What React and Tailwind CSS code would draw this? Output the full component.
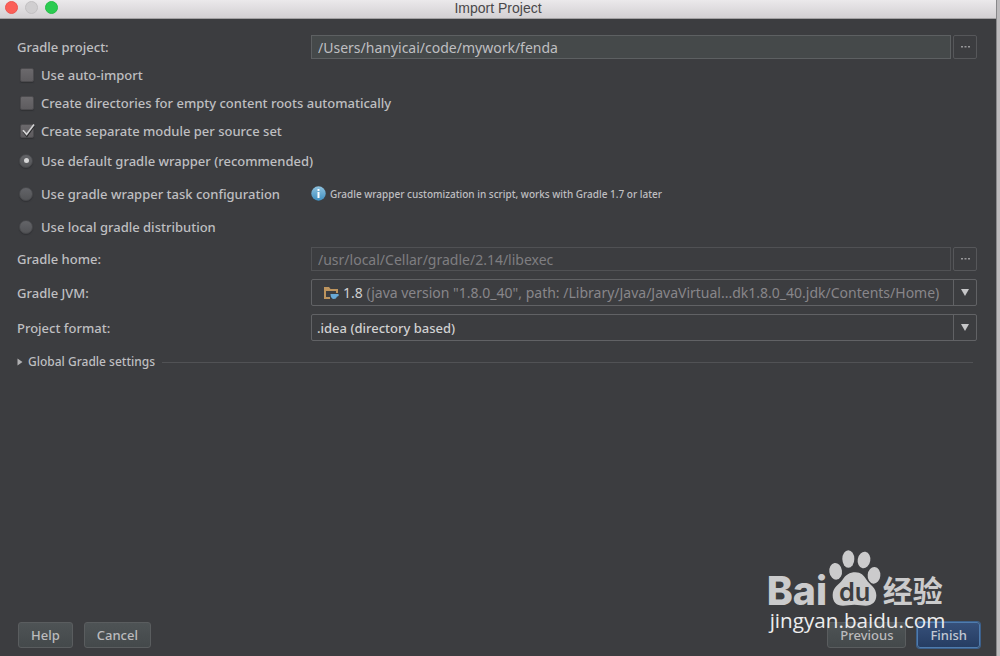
import React, { useState } from "react";

const fieldBox = "h-6 min-w-0 flex-1 border px-1.5 text-[14px] leading-5 font-normal outline-none";

function Row({ label, htmlFor, children }) {
  return (
    <div className="flex items-center">
      <label htmlFor={htmlFor} className="w-[294px] shrink-0">{label}</label>
      <div className="flex min-w-0 flex-1 gap-0.5">{children}</div>
    </div>
  );
}

function BrowseButton({ label }) {
  return (
    <button type="button" aria-label={label} className="flex h-6 w-6 shrink-0 items-center justify-center rounded-xs border border-[#56575a]">
      <svg viewBox="0 0 9 2" className="h-0.5 w-[9px]" fill="#97989a">
        <rect x="0" width="2" height="1.5" />
        <rect x="3.5" width="2" height="1.5" />
        <rect x="7" width="2" height="1.5" />
      </svg>
    </button>
  );
}

function Dropdown({ id, options, children }) {
  return (
    <div className="relative flex h-[27px] min-w-0 flex-1 rounded-xs border border-[#616265] text-[#d0d0d1]">
      <div className="flex min-w-0 flex-1 items-center overflow-hidden whitespace-nowrap" aria-hidden="true">{children}</div>
      <div className="flex w-[23px] shrink-0 items-center justify-center border-l border-[#616265]">
        <svg viewBox="0 0 8 7" className="h-[7px] w-2" fill="#c6c6c8"><path d="M0 0h8L4 7z" /></svg>
      </div>
      <select id={id} className="absolute inset-0 h-full w-full cursor-default opacity-0">
        {options.map((o) => <option key={o}>{o}</option>)}
      </select>
    </div>
  );
}

function Check({ label, initial = false }) {
  const [on, setOn] = useState(initial);
  return (
    <label className="flex h-7 items-center gap-[7px] pl-[3px]">
      <span className="relative flex h-3.5 w-3.5">
        <input type="checkbox" checked={on} onChange={() => setOn(!on)} className="h-3.5 w-3.5 appearance-none rounded-xs border border-[#4c4b4e] bg-linear-to-b from-[#6b696c] to-[#5e5c5f] shadow-[0_1px_1px_#303134]" />
        {on && (
          <svg viewBox="0 0 16 16" className="pointer-events-none absolute -top-0.5 left-0 h-4 w-4" fill="none">
            <path d="M3.3 9.3l3.600 4.600L14 4" stroke="#29292b" strokeWidth="2" />
            <path d="M3 8.200l3.600 4.200L14 2.600" stroke="#d2d2d3" strokeWidth="1.700" />
          </svg>
        )}
      </span>
      {label}
    </label>
  );
}

function Radio({ label, value, current, onChange }) {
  return (
    <label className="flex h-[33px] items-center gap-2 pl-0.5">
      <span className="relative flex h-3.5 w-3.5 items-center justify-center">
        <input type="radio" name="distribution" checked={current === value} onChange={() => onChange(value)} className="h-3.5 w-3.5 appearance-none rounded-full border border-[#47484b] bg-linear-to-b from-[#636468] to-[#535457] shadow-[0_1px_1px_#303134]" />
        {current === value && <span className="pointer-events-none absolute h-[5px] w-[5px] rounded-full bg-[#d6d6d7]" />}
      </span>
      {label}
    </label>
  );
}

function PushButton({ children, primary = false }) {
  return (
    <button
      type="button"
      className={
        primary
          ? "h-[26px] rounded-[3px] border border-[#4f7cae] bg-linear-to-b from-[#36507a] to-[#263d63] px-3 shadow-[0_0_0_1px_#3c608c] text-[#c3c9d3]"
          : "h-[26px] rounded-[3px] border border-[#5a5d5f] bg-linear-to-b from-[#4e5355] to-[#44494b] px-3 text-[#bbbbbd]"
      }
    >
      {children}
    </button>
  );
}

function Watermark() {
  return (
    <div className="pointer-events-none absolute right-[50px] bottom-[18px] text-[#cbcbcc]">
      <svg viewBox="0 0 546 267" className="block h-[89px] w-[182px] overflow-visible" fill="currentColor">
        <text x="8" y="167" fontFamily="Inter, 'Liberation Sans', sans-serif" fontWeight="800" fontSize="118">Bai</text>
        <ellipse cx="215" cy="67" rx="19" ry="25" transform="rotate(-8 215 67)" />
        <ellipse cx="253" cy="30" rx="18" ry="26" />
        <ellipse cx="300" cy="33" rx="19" ry="25" transform="rotate(10 300 33)" />
        <ellipse cx="330" cy="79" rx="19" ry="25" transform="rotate(5 330 79)" />
        <path d="M274 70c17 0 25 9 34 23 9 14 29 23 29 46 0 20-13 31-32 31-12 0-20-3-34-3s-22 3-34 3c-20 0-31-11-31-32 0-23 19-31 29-45 10-15 22-23 39-23z" />
        <text x="225" y="155" fill="#3c3d40" fontFamily="Inter, 'Liberation Sans', sans-serif" fontWeight="600" fontSize="76">du</text>
        <text x="356" y="160" fontFamily="'Noto Sans CJK SC', sans-serif" fontWeight="700" fontSize="90">经验</text>
        <text x="17" y="236" fill="#ededee" fontFamily="'Open Sans', 'Noto Sans', sans-serif" fontSize="62">jingyan.baidu.com</text>
      </svg>
    </div>
  );
}

export default function App() {
  const [dist, setDist] = useState("default");
  return (
    <div className="flex min-h-screen bg-[#bdbbbd] pr-[3px] font-['Noto_Sans','Open_Sans',sans-serif] text-[13px] leading-5 font-medium text-[#bfbfc1]">
      <div className="relative flex min-w-0 flex-1 flex-col border-r border-[#88888a] bg-[#3c3d40]">
        <header className="relative flex h-[19px] items-center justify-center border-b border-[#a3a1a3] bg-linear-to-b from-[#ebe9eb] to-[#d3d0d3] pb-0.5">
          <div className="absolute top-px left-[5px] flex gap-[7px]">
            <button type="button" aria-label="Close" className="h-[13px] w-[13px] rounded-full border border-[#ed5550] bg-[#fb5f58]" />
            <button type="button" aria-label="Minimize" className="h-[13px] w-[13px] rounded-full border border-[#c2c0c2] bg-[#d0ced0]" />
            <button type="button" aria-label="Zoom" className="h-[13px] w-[13px] rounded-full border border-[#24bd46] bg-[#2bcb51]" />
          </div>
          <h1 className="font-['Liberation_Sans',sans-serif] text-[14px] font-normal text-[#49484a]">Import Project</h1>
        </header>

        <form className="flex flex-1 flex-col pt-4" onSubmit={(e) => e.preventDefault()}>
          <div className="pr-[19px] pl-[17px]">
            <Row label="Gradle project:" htmlFor="project">
              <input id="project" type="text" defaultValue="/Users/hanyicai/code/mywork/fenda" className={`${fieldBox} border-[#5d6062] bg-[#45494a]`} />
              <BrowseButton label="Browse project" />
            </Row>
            <div className="mt-0.5">
              <Check label="Use auto-import" />
              <Check label="Create directories for empty content roots automatically" />
              <Check label="Create separate module per source set" initial />
            </div>
            <div className="-mt-px">
              <Radio label="Use default gradle wrapper (recommended)" value="default" current={dist} onChange={setDist} />
              <div className="flex items-center">
                <div className="w-[294px] shrink-0">
                  <Radio label="Use gradle wrapper task configuration" value="task" current={dist} onChange={setDist} />
                </div>
                <svg viewBox="0 0 15 15" className="h-[15px] w-[15px] shrink-0">
                  <defs>
                    <linearGradient id="info" x2="0" y2="1">
                      <stop stopColor="#8fc2de" />
                      <stop offset="1" stopColor="#3f8fc0" />
                    </linearGradient>
                  </defs>
                  <circle cx="7.5" cy="7.5" r="7.2" fill="url(#info)" />
                  <rect x="6.5" y="3" width="2" height="2" rx="0.5" fill="#fff" />
                  <rect x="6.5" y="6" width="2" height="6" fill="#fff" />
                </svg>
                <span className="ml-1 text-[10px]">Gradle wrapper customization in script, works with Gradle 1.7 or later</span>
              </div>
              <Radio label="Use local gradle distribution" value="local" current={dist} onChange={setDist} />
            </div>
            <div className="mt-1 flex flex-col gap-2">
              <Row label="Gradle home:" htmlFor="home">
                <input id="home" type="text" disabled defaultValue="/usr/local/Cellar/gradle/2.14/libexec" className={`${fieldBox} border-[#505154] text-[#7f7e81]`} />
                <BrowseButton label="Browse home" />
              </Row>
              <Row label="Gradle JVM:" htmlFor="jvm">
                <Dropdown id="jvm" options={['1.8 (java version "1.8.0_40")']}>
                  <svg viewBox="0 0 16 14" className="mr-1 ml-[11px] h-3.5 w-4 shrink-0">
                    <path d="M1 1h5l1.5 2H15v4h-2V5H3v6h4v2H1z" fill="#bd945e" />
                    <path d="M7.500 8h7.500c1.200 0 1.200 2.300-1 2.500-.5 1.700-1.500 2.500-3.200 2.500S7.500 11.500 7.500 8z" fill="#68a9d6" />
                  </svg>
                  <span className="text-[14px] font-normal">1.8 <span className="text-[#88868a]">(java version "1.8.0_40", path: /Library/Java/JavaVirtual...dk1.8.0_40.jdk/Contents/Home)</span></span>
                </Dropdown>
              </Row>
              <Row label="Project format:" htmlFor="format">
                <Dropdown id="format" options={[".idea (directory based)", ".ipr (file based)"]}>
                  <span className="pl-[5px]">.idea (directory based)</span>
                </Dropdown>
              </Row>
            </div>
            <div className="mt-[11px] flex items-center gap-[7px] pr-1">
              <button type="button" aria-expanded="false" className="flex items-center gap-[5px] text-[12px] leading-5">
                <svg viewBox="0 0 6 8" className="h-2 w-1.5" fill="#b0b0b2"><path d="M0.500 0.500v7L5.500 4z" /></svg>
                Global Gradle settings
              </button>
              <div className="h-px flex-1 bg-[#515255]" />
            </div>
          </div>

          <footer className="mt-auto flex justify-between pr-4 pb-2 pl-[18px]">
            <div className="flex gap-[11px]">
              <PushButton>Help</PushButton>
              <PushButton>Cancel</PushButton>
            </div>
            <div className="flex gap-[11px]">
              <PushButton>Previous</PushButton>
              <PushButton primary>Finish</PushButton>
            </div>
          </footer>
        </form>
        <Watermark />
      </div>
    </div>
  );
}
